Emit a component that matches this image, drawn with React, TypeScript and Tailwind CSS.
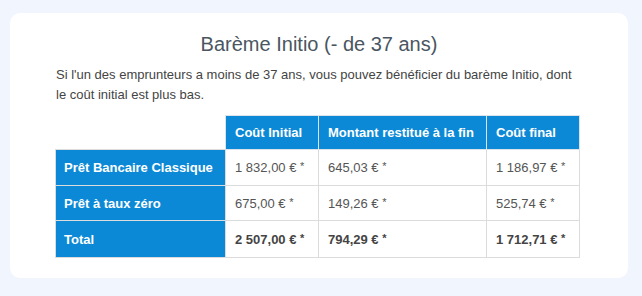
const rows = [
  { label: "Prêt Bancaire Classique", values: ["1 832,00 €", "645,03 €", "1 186,97 €"] },
  { label: "Prêt à taux zéro", values: ["675,00 €", "149,26 €", "525,74 €"] },
];

const total = { label: "Total", values: ["2 507,00 €", "794,29 €", "1 712,71 €"] };

function Amount({ value }: { value: string }) {
  return (
    <>
      {value} <span className="align-[2px] text-[11px] leading-[11px]">*</span>
    </>
  );
}

export default function App() {
  return (
    <div className="min-h-screen bg-[#f1f5fe] pt-[13px] px-[10px] pb-[18px] font-['Liberation_Sans',Arial,sans-serif]">
      <div className="w-[618px] rounded-[10px] bg-white pt-[17px] pb-[20px] px-[45px]">
        <h2 className="text-center text-[20px] leading-[28px] text-[#4a5662]">Barème Initio (- de 37 ans)</h2>
        <p className="mt-[7px] pl-[1px] text-[13px] leading-[20px] text-[#444]">
          Si l'un des emprunteurs a moins de 37 ans, vous pouvez bénéficier du barème Initio, dont le coût initial est
          plus bas.
        </p>
        <table className="mt-[10px] w-[524px] table-fixed border-collapse text-[13px] leading-[15px]">
          <colgroup>
            <col className="w-[170px]" />
            <col className="w-[93px]" />
            <col className="w-[168px]" />
            <col className="w-[93px]" />
          </colgroup>
          <thead>
            <tr className="h-[34px]">
              <th />
              {["Coût Initial", "Montant restitué à la fin", "Coût final"].map((h) => (
                <th
                  key={h}
                  className="border border-[#dde3ea] bg-[#0b89d6] px-[9px] text-left font-bold text-white"
                >
                  {h}
                </th>
              ))}
            </tr>
          </thead>
          <tbody>
            {rows.map((r, i) => (
              <tr key={r.label} className={i === 0 ? "h-[36px]" : "h-[35px]"}>
                <th className="border border-[#dcdcdc] bg-[#0b89d6] px-[8px] text-left font-bold text-white">
                  {r.label}
                </th>
                {r.values.map((v, j) => (
                  <td key={j} className="border border-[#dcdcdc] px-[9px] text-[#555]">
                    <Amount value={v} />
                  </td>
                ))}
              </tr>
            ))}
            <tr className="h-[37px]">
              <th className="border border-[#dcdcdc] bg-[#0b89d6] px-[8px] text-left font-bold text-white">
                {total.label}
              </th>
              {total.values.map((v, j) => (
                <td key={j} className="border border-[#dcdcdc] px-[9px] font-bold text-[#444]">
                  <Amount value={v} />
                </td>
              ))}
            </tr>
          </tbody>
        </table>
      </div>
    </div>
  );
}
